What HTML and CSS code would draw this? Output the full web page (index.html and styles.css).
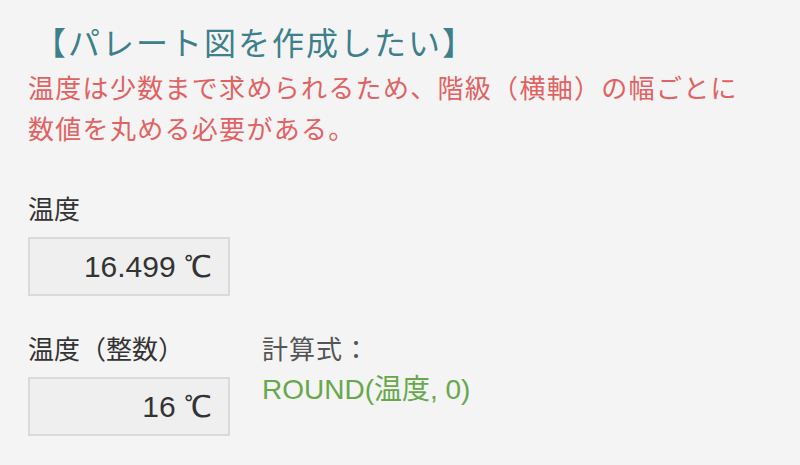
FILE: index.html
```html
<!DOCTYPE html>
<html lang="ja">
<head>
  <meta charset="UTF-8">
  <title>パレート図</title>
  <link rel="stylesheet" href="styles.css">
</head>
<body>
  <div class="page">
    <h1 class="title">【パレート図を作成したい】</h1>
    <p class="note">温度は少数まで求められるため、階級（横軸）の幅ごとに<br>数値を丸める必要がある。</p>

    <div class="field">
      <div class="label">温度</div>
      <div class="box">16.499 ℃</div>
    </div>

    <div class="row">
      <div class="field">
        <div class="label">温度（整数）</div>
        <div class="box">16 ℃</div>
      </div>
      <div class="formula">
        <div class="formula-label">計算式：</div>
        <div class="formula-code">ROUND(温度, 0)</div>
      </div>
    </div>
  </div>
</body>
</html>
```

FILE: styles.css
```css
body {
  margin: 0;
  background: #f4f4f4;
  font-family: 'Noto Sans CJK JP', 'Noto Sans', sans-serif;
  color: #333;
}

.page {
  padding: 20px 0 0 28px;
}

.title {
  margin: 0 0 0 6px;
  font-size: 32px;
  font-weight: normal;
  line-height: 42px;
  letter-spacing: 2px;
  color: #3d7f8a;
}

.note {
  margin: 4px 0 0;
  font-size: 26px;
  line-height: 41px;
  letter-spacing: 1.3px;
  color: #e06262;
}

.field {
  width: 202px;
}

.label {
  margin-top: 42px;
  font-size: 26px;
  line-height: 36px;
}

.box {
  box-sizing: border-box;
  height: 59px;
  margin-top: 11px;
  padding-right: 16px;
  border: 2px solid #dadada;
  background: #efefef;
  font-family: 'Liberation Sans', sans-serif;
  font-size: 30px;
  line-height: 55px;
  text-align: right;
}

.row {
  display: flex;
  gap: 32px;
}

.row .label {
  margin-top: 34px;
}

.formula {
  padding-top: 34px;
  font-size: 26px;
  line-height: 36px;
}

.formula-label {
  color: #555;
  letter-spacing: 1px;
}

.formula-code {
  margin-top: 6px;
  color: #67a84c;
  font-family: 'Liberation Sans', 'Noto Sans CJK JP', sans-serif;
  font-size: 28px;
}
```
